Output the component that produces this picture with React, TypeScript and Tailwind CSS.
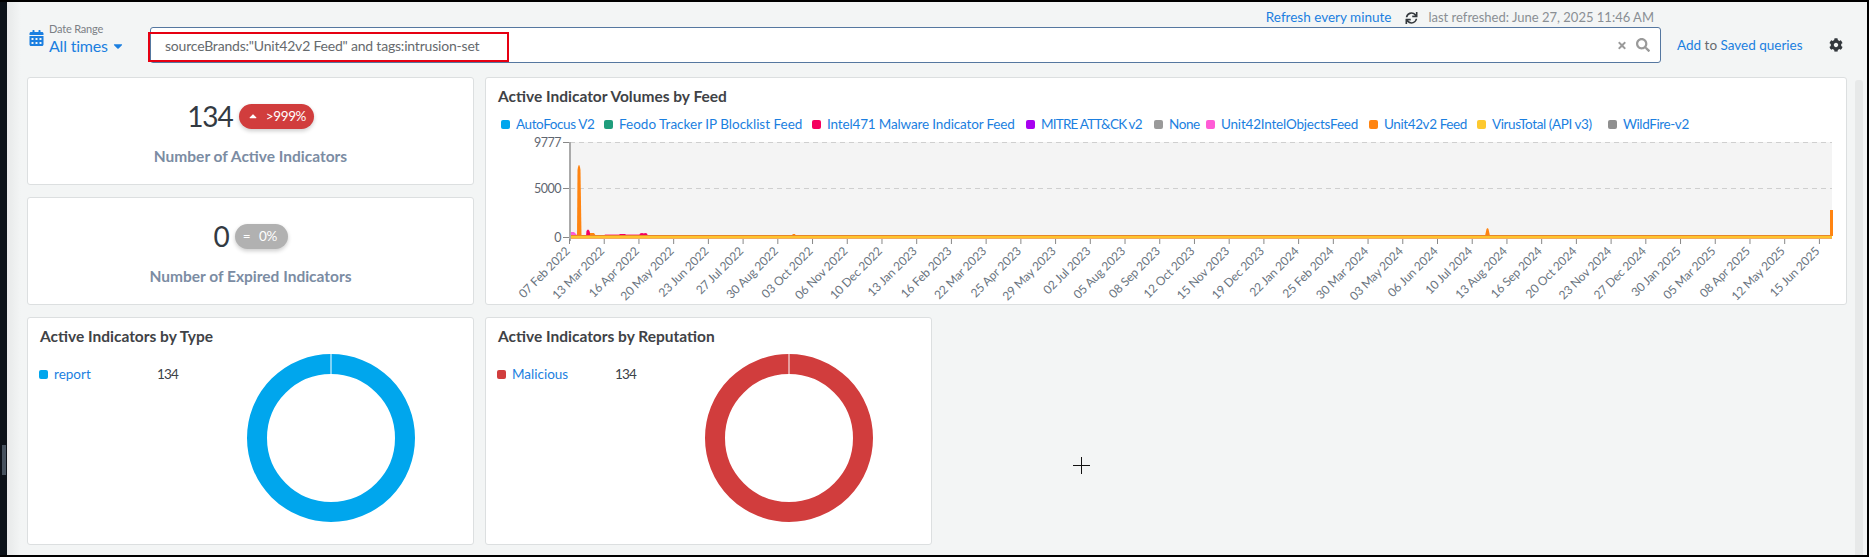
import { FaCalendarAlt, FaCaretDown, FaCaretUp, FaCog, FaSearch, FaSync, FaTimes } from "react-icons/fa";

const feeds = [
  { name: "AutoFocus V2", color: "bg-[#00a6ed]", width: "w-[103px] tracking-[-0.4px]" },
  { name: "Feodo Tracker IP Blocklist Feed", color: "bg-[#1f9d7c]", width: "w-[208px] tracking-[0px]" },
  { name: "Intel471 Malware Indicator Feed", color: "bg-[#f5005f]", width: "w-[214px] tracking-[-0.15px]" },
  { name: "MITRE ATT&CK v2", color: "bg-[#a800f0]", width: "w-[128px] tracking-[-0.8px]" },
  { name: "None", color: "bg-[#9a9a9a]", width: "w-[52px] tracking-[-0.4px]" },
  { name: "Unit42IntelObjectsFeed", color: "bg-[#ff5bd6]", width: "w-[163px] tracking-[-0.2px]" },
  { name: "Unit42v2 Feed", color: "bg-[#ff8411]", width: "w-[108px] tracking-[-0.4px]" },
  { name: "VirusTotal (API v3)", color: "bg-[#fdc92f]", width: "w-[131px] tracking-[-0.4px]" },
  { name: "WildFire-v2", color: "bg-[#8f8f8f]", width: "w-[80px] tracking-[-0.4px]" },
];

const ticks = [
  "07 Feb 2022", "13 Mar 2022", "16 Apr 2022", "20 May 2022", "23 Jun 2022", "27 Jul 2022", "30 Aug 2022",
  "03 Oct 2022", "06 Nov 2022", "10 Dec 2022", "13 Jan 2023", "16 Feb 2023", "22 Mar 2023", "25 Apr 2023",
  "29 May 2023", "02 Jul 2023", "05 Aug 2023", "08 Sep 2023", "12 Oct 2023", "15 Nov 2023", "19 Dec 2023",
  "22 Jan 2024", "25 Feb 2024", "30 Mar 2024", "03 May 2024", "06 Jun 2024", "10 Jul 2024", "13 Aug 2024",
  "16 Sep 2024", "20 Oct 2024", "23 Nov 2024", "27 Dec 2024", "30 Jan 2025", "05 Mar 2025", "08 Apr 2025",
  "12 May 2025", "15 Jun 2025",
];

function VolumeChart() {
  return (
    <svg viewBox="486 134 1360 170" className="block h-[170px] w-[1360px]">
      <rect x="570" y="142" width="1262" height="95" fill="#f4f4f4" />
      <line x1="570" y1="142.5" x2="1832" y2="142.5" stroke="#cfcfcf" strokeDasharray="5 4" />
      <line x1="570" y1="188.5" x2="1832" y2="188.5" stroke="#cfcfcf" strokeDasharray="5 4" />
      <path d="M570 236 L571 232 L574 232 L577 235 L577 236 Z" fill="#ff5bd6" />
      <path d="M604 236 L605 234 L640 234 L642 235 L652 236 Z" fill="#ff8fb5" />
      <path d="M618 236 L620 234 L625 234 L627 236 Z" fill="#f5005f" />
      <path d="M639 236 L640 233.5 L642 233 L644 233.5 L645 233 L647 233.5 L648 236 Z" fill="#f5005f" />
      <path d="M586 236 L586.5 231 Q588 228 589.5 231 L590 233 L590 236 Z" fill="#f5005f" />
      <path d="M590 236 L590 233 L594 233 L596 236 Z" fill="#ff8411" />
      <path d="M577 236 L577.5 170 Q579 160 580.5 170 L581.5 236 Z" fill="#ff8411" />
      <path d="M791 236 L793 234 L795 234 L796 236 Z" fill="#ff8411" />
      <path d="M1485 236 L1486.5 229 L1487.5 228 L1488.5 229 L1490 236 Z" fill="#ff8411" />
      <path d="M1830 236 L1830 210 L1833 210 L1833 236 Z" fill="#ff8411" />
      <rect x="570" y="235" width="1262" height="1" fill="#e8862a" />
      <rect x="570" y="236" width="1262" height="2.3" fill="#fdc42d" />
      <rect x="570" y="238.3" width="1262" height="0.7" fill="#f09030" />
      <rect x="569" y="142" width="2" height="99" fill="#aaaaaa" />
      {[142, 188, 237].map((y) => (
        <line key={y} x1="563" y1={y + 0.5} x2="569" y2={y + 0.5} stroke="#888888" />
      ))}
      <g fill="#5f6670" fontSize="12.5" letterSpacing="-0.5" textAnchor="end">
        <text x="561" y="147">9777</text>
        <text x="561" y="193">5000</text>
        <text x="561" y="242">0</text>
      </g>
      {ticks.map((label, i) => {
        const x = 569.5 + i * 34.72;
        return (
          <g key={label}>
            <line x1={x} y1="239" x2={x} y2="244" stroke="#888888" />
            <text
              x={x + 1}
              y="252"
              fill="#6a7480"
              fontSize="12"
              letterSpacing="-0.1"
              textAnchor="end"
              transform={`rotate(-45 ${x + 1} 252)`}
            >
              {label}
            </text>
          </g>
        );
      })}
    </svg>
  );
}

function StatCard({
  value,
  label,
  tone,
  icon,
  delta,
}: {
  value: string;
  label: string;
  tone: string;
  icon: React.ReactNode;
  delta: string;
}) {
  return (
    <div className="flex flex-col items-center rounded-[3px] border border-[#dcdfe0] bg-white">
      <div className="mt-[24px] flex h-[28px] items-center">
        <span className="text-[28px] leading-none tracking-[-1px] text-[#333a42]">{value}</span>
        <span
          className={`ml-[6px] flex h-[25px] items-center rounded-full pl-[8px] text-[13.5px] tracking-[-0.4px] text-white shadow-[0_2px_4px_rgba(0,0,0,0.2)] ${tone}`}
        >
          {icon}
          {delta}
        </span>
      </div>
      <div className="mt-[14px] text-[15.5px] font-bold leading-[24px] text-[#7b8ca3]">{label}</div>
    </div>
  );
}

function DonutCard({
  title,
  name,
  swatch,
  stroke,
}: {
  title: string;
  name: string;
  swatch: string;
  stroke: string;
}) {
  return (
    <div className="flex flex-col rounded-[3px] border border-[#dcdfe0] bg-white pl-[12px]">
      <div className="flex h-[36px] items-center pt-[2px] text-[15.5px] font-bold text-[#404246]">{title}</div>
      <div className="flex">
        <div className="mt-[10px] flex h-[20px] w-[207px] items-center text-[13.5px]">
          <span className={`ml-[-1px] h-[9px] w-[9px] shrink-0 rounded-[2px] ${swatch}`} />
          <span className="ml-[6px] w-[103px] text-[#1b7fe0]">{name}</span>
          <span className="tracking-[-0.8px] text-[#3c4248]">134</span>
        </div>
        <svg viewBox="0 0 168 168" className="h-[168px] w-[168px]">
          <circle cx="84" cy="84" r="74" fill="none" stroke={stroke} strokeWidth="20" />
          <line x1="84" y1="0" x2="84" y2="20" stroke="#ffffff" />
        </svg>
      </div>
    </div>
  );
}

export default function App() {
  return (
    <div className="relative flex h-[557px] w-[1869px] overflow-hidden bg-black py-[2px] pr-[2px] [font-family:Lato,sans-serif]">
      <div className="w-[7px] shrink-0 bg-[#0b1118] pl-[2px] pt-[443px]">
        <div className="h-[30px] w-[4px] bg-[#46525e]" />
      </div>

      <div className="flex min-w-0 flex-1 bg-[linear-gradient(90deg,#e7e9e9,#f3f5f5_14px,#f3f5f5)]">
        <div className="min-w-0 flex-1">
          <div className="flex h-[25px] items-center justify-end gap-[14px] pr-[201px] pt-[6px] leading-none">
            <span className="text-[13.5px] text-[#1b7fe0]">Refresh every minute</span>
            <span className="flex items-center gap-[10px] text-[13px] text-[#8a8f94]">
              <FaSync className="h-[12px] w-[13px] text-[#33383d]" />
              last refreshed: June 27, 2025 11:46 AM
            </span>
          </div>

          <div className="flex h-[36px] items-center pl-[20px]">
            <div className="mb-[10px] flex w-[123px] shrink-0 items-center pl-[2px]">
              <FaCalendarAlt className="mb-[4px] h-[16px] w-[15px] text-[#1b7fe0]" />
              <div className="ml-[5px]">
                <div className="text-[11px] leading-[12px] tracking-[-0.2px] text-[#7b8085]">Date Range</div>
                <div className="flex items-center gap-[5px] text-[16px] leading-[22px] tracking-[-0.2px] text-[#1b7fe0]">
                  All times
                  <FaCaretDown className="h-[14px] w-[10px]" />
                </div>
              </div>
            </div>

            <div className="relative flex h-[36px] w-[1511px] shrink-0 items-center rounded-[3px] border border-[#5577a0] bg-white pl-[14px] pr-[10px] text-[14px] tracking-[-0.2px] text-[#666a6e]">
              <span className="flex-1 pt-[1px]">sourceBrands:"Unit42v2 Feed" and tags:intrusion-set</span>
              <FaTimes className="mr-[9px] h-[11px] w-[10px] text-[#9a9a9a]" />
              <FaSearch className="h-[14px] w-[14px] text-[#9a9a9a]" />
              <div className="absolute left-[-3px] top-[4px] h-[30px] w-[361px] border-2 border-[#e60012]" />
            </div>

            <div className="ml-[16px] w-[152px] shrink-0 text-[13.5px] text-[#666a6e]">
              <span className="text-[#1b7fe0]">Add</span> to <span className="text-[#1b7fe0]">Saved queries</span>
            </div>
            <FaCog className="h-[14px] w-[14px] shrink-0 text-[#33383d]" />
          </div>

          <div className="mt-[14px] ml-[20px] grid grid-cols-[447px_447px_904px] grid-rows-[108px_108px_228px] gap-x-[11px] gap-y-[12px]">
            <StatCard
              value="134"
              label="Number of Active Indicators"
              tone="w-[75px] bg-[#d13d3d]"
              icon={<FaCaretUp className="ml-[1px] mr-[8px] h-[12px] w-[10px]" />}
              delta=">999%"
            />
            <div className="col-span-2 row-span-2 flex flex-col rounded-[3px] border border-[#dcdfe0] bg-white pt-[8px]">
              <div className="h-[20px] pl-[12px] text-[15.5px] font-bold leading-[20px] text-[#404246]">
                Active Indicator Volumes by Feed
              </div>
              <div className="mt-[8px] flex h-[20px] items-center pl-[15px] text-[13.5px]">
                {feeds.map((feed) => (
                  <div key={feed.name} className={`flex shrink-0 items-center gap-[6px] ${feed.width}`}>
                    <span className={`h-[9px] w-[9px] shrink-0 rounded-[2px] ${feed.color}`} />
                    <span className="whitespace-nowrap text-[#1b7fe0]">{feed.name}</span>
                  </div>
                ))}
              </div>
              <VolumeChart />
            </div>
            <StatCard
              value="0"
              label="Number of Expired Indicators"
              tone="w-[53px] bg-[#b1b1b1]"
              icon={<span className="mr-[9px]">=</span>}
              delta="0%"
            />
            <DonutCard title="Active Indicators by Type" name="report" swatch="bg-[#00a6ed]" stroke="#00a6ed" />
            <DonutCard title="Active Indicators by Reputation" name="Malicious" swatch="bg-[#d13d3d]" stroke="#d13d3d" />
          </div>
        </div>

        <div className="mt-[78px] w-[8px] shrink-0 rounded-t-[3px] bg-[#e7e9e9]" />
        <div className="w-[4px] shrink-0" />
      </div>

      <svg viewBox="0 0 17 17" className="absolute left-[1073px] top-[457px] h-[17px] w-[17px]">
        <path d="M8.5 0V17M0 8.5H17" stroke="#111111" fill="none" />
      </svg>
    </div>
  );
}
